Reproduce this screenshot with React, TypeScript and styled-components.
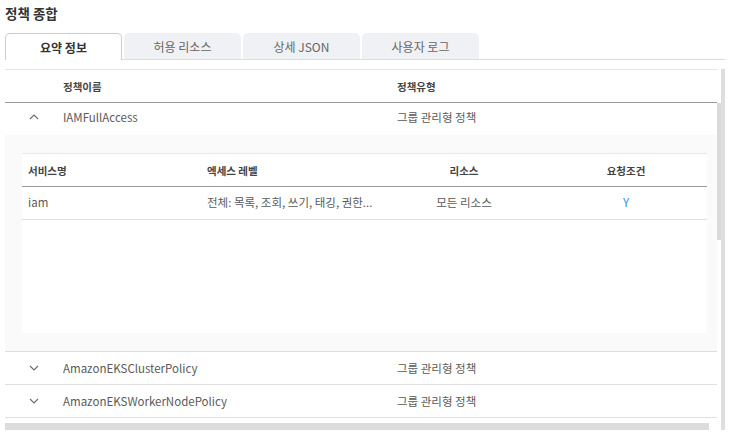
import React from "react";
import styled, { createGlobalStyle } from "styled-components";

const GlobalStyle = createGlobalStyle`
  html, body { margin: 0; padding: 0; background: #ffffff; }
  body { font-family: "Noto Sans CJK KR", "Noto Sans", sans-serif; color: #555; }
  * { box-sizing: border-box; }
`;

const Page = styled.div`
  width: 733px;
  height: 442px;
  padding: 4px 8px 0 5px;
  display: flex;
  flex-direction: column;
`;

const Title = styled.h1`
  margin: 0;
  font-size: 13.5px;
  line-height: 19px;
  font-weight: 700;
  color: #333;
`;

const TabBar = styled.div`
  margin-top: 10px;
  display: flex;
  gap: 2px;
  border-bottom: 1px solid #dddddd;
  height: 27px;
`;

const Tab = styled.div<{ $active?: boolean }>`
  width: 117px;
  height: ${(p) => (p.$active ? "27px" : "26px")};
  display: flex;
  align-items: center;
  justify-content: center;
  font-size: 12px;
  border-radius: 5px 5px 0 0;
  color: ${(p) => (p.$active ? "#333" : "#666")};
  font-weight: ${(p) => (p.$active ? 700 : 400)};
  background: ${(p) => (p.$active ? "#ffffff" : "#f0f1f4")};
  border: ${(p) => (p.$active ? "1px solid #cccccc" : "none")};
  border-bottom: none;
`;

const Frame = styled.div`
  margin-top: 9px;
  display: grid;
  grid-template-columns: 712px 4px 4px;
  grid-template-rows: 354px 7px;
`;

const Content = styled.div`
  grid-column: 1;
  grid-row: 1;
  overflow: hidden;
  display: flex;
  flex-direction: column;
`;

const InnerTrack = styled.div`
  grid-column: 2;
  grid-row: 1;
  padding-top: 34px;
`;

const Thumb = styled.div`
  height: 137px;
  background: #dadada;
`;

const OuterTrack = styled.div`
  grid-column: 3;
  grid-row: 1 / 3;
  background: #dedede;
`;

const HBar = styled.div`
  grid-column: 1;
  grid-row: 2;
  width: 704px;
  background: #dcdcdc;
`;

const MainGrid = styled.div<{ $head?: boolean; $border?: string; $h?: number; $lift?: number }>`
  display: grid;
  grid-template-columns: 58px 334px 1fr;
  align-items: center;
  height: ${(p) => (p.$h ?? (p.$head ? 34 : 33))}px;
  padding-bottom: ${(p) => p.$lift ?? 0}px;
  border-top: ${(p) => (p.$head ? "1px solid #e6e6e6" : "none")};
  border-bottom: ${(p) => p.$border ?? "1px solid #e0e0e0"};
  font-size: ${(p) => (p.$head ? "10.5px" : "11.5px")};
  font-weight: ${(p) => (p.$head ? 700 : 400)};
  color: ${(p) => (p.$head ? "#444" : "#5a5a5a")};
`;

const Cell = styled.div`
  white-space: nowrap;
  overflow: hidden;
  text-overflow: ellipsis;
`;

const ChevronCell = styled.div`
  display: flex;
  justify-content: center;
  align-items: center;
`;

const Expanded = styled.div`
  background: #fafafa;
  padding: 18px 10px 18px 17px;
  border-bottom: 1px solid #dddddd;
  height: 217px;
`;

const Card = styled.div`
  background: #ffffff;
  height: 180px;
`;

const SubGrid = styled.div<{ $head?: boolean }>`
  display: grid;
  grid-template-columns: 179px 182px 162px 162px;
  align-items: center;
  height: ${(p) => (p.$head ? "34px" : "33px")};
  padding-bottom: ${(p) => (p.$head ? "0" : "3px")};
  border-top: ${(p) => (p.$head ? "1px solid #e8e8e8" : "none")};
  border-bottom: ${(p) => (p.$head ? "1px solid #999999" : "1px solid #e0e0e0")};
  font-size: ${(p) => (p.$head ? "10.5px" : "11.5px")};
  font-weight: ${(p) => (p.$head ? 700 : 400)};
  color: ${(p) => (p.$head ? "#444" : "#5a5a5a")};
`;

const SubCell = styled.div<{ $center?: boolean; $blue?: boolean }>`
  padding-left: ${(p) => (p.$center ? "0" : "6px")};
  text-align: ${(p) => (p.$center ? "center" : "left")};
  color: ${(p) => (p.$blue ? "#3b8fe6" : "inherit")};
  white-space: nowrap;
`;

const Chevron = ({ up }: { up?: boolean }) => (
  <svg width="10" height="6" viewBox="0 0 10 6">
    <polyline
      points={up ? "1,5 5,1 9,5" : "1,1 5,5 9,1"}
      fill="none"
      stroke="#6a6a6a"
      strokeWidth="1.1"
    />
  </svg>
);

const policies = [
  { name: "AmazonEKSClusterPolicy", type: "그룹 관리형 정책" },
  { name: "AmazonEKSWorkerNodePolicy", type: "그룹 관리형 정책" },
];

export default function App() {
  return (
    <>
      <GlobalStyle />
      <Page>
        <Title>정책 종합</Title>
        <TabBar>
          <Tab $active>요약 정보</Tab>
          <Tab>허용 리소스</Tab>
          <Tab>상세 JSON</Tab>
          <Tab>사용자 로그</Tab>
        </TabBar>
        <Frame>
          <Content>
            <MainGrid $head $border="1px solid #999999">
              <span />
              <Cell>정책이름</Cell>
              <Cell>정책유형</Cell>
            </MainGrid>
            <MainGrid $border="none" $h={32} $lift={4}>
              <ChevronCell>
                <Chevron up />
              </ChevronCell>
              <Cell>IAMFullAccess</Cell>
              <Cell>그룹 관리형 정책</Cell>
            </MainGrid>
            <Expanded>
              <Card>
                <SubGrid $head>
                  <SubCell>서비스명</SubCell>
                  <SubCell>엑세스 레벨</SubCell>
                  <SubCell $center>리소스</SubCell>
                  <SubCell $center>요청조건</SubCell>
                </SubGrid>
                <SubGrid>
                  <SubCell>iam</SubCell>
                  <SubCell>전체: 목록, 조회, 쓰기, 태깅, 권한...</SubCell>
                  <SubCell $center>모든 리소스</SubCell>
                  <SubCell $center $blue>
                    Y
                  </SubCell>
                </SubGrid>
              </Card>
            </Expanded>
            {policies.map((p) => (
              <MainGrid key={p.name} $lift={1}>
                <ChevronCell>
                  <Chevron />
                </ChevronCell>
                <Cell>{p.name}</Cell>
                <Cell>{p.type}</Cell>
              </MainGrid>
            ))}
          </Content>
          <InnerTrack>
            <Thumb />
          </InnerTrack>
          <OuterTrack />
          <HBar />
        </Frame>
      </Page>
    </>
  );
}
